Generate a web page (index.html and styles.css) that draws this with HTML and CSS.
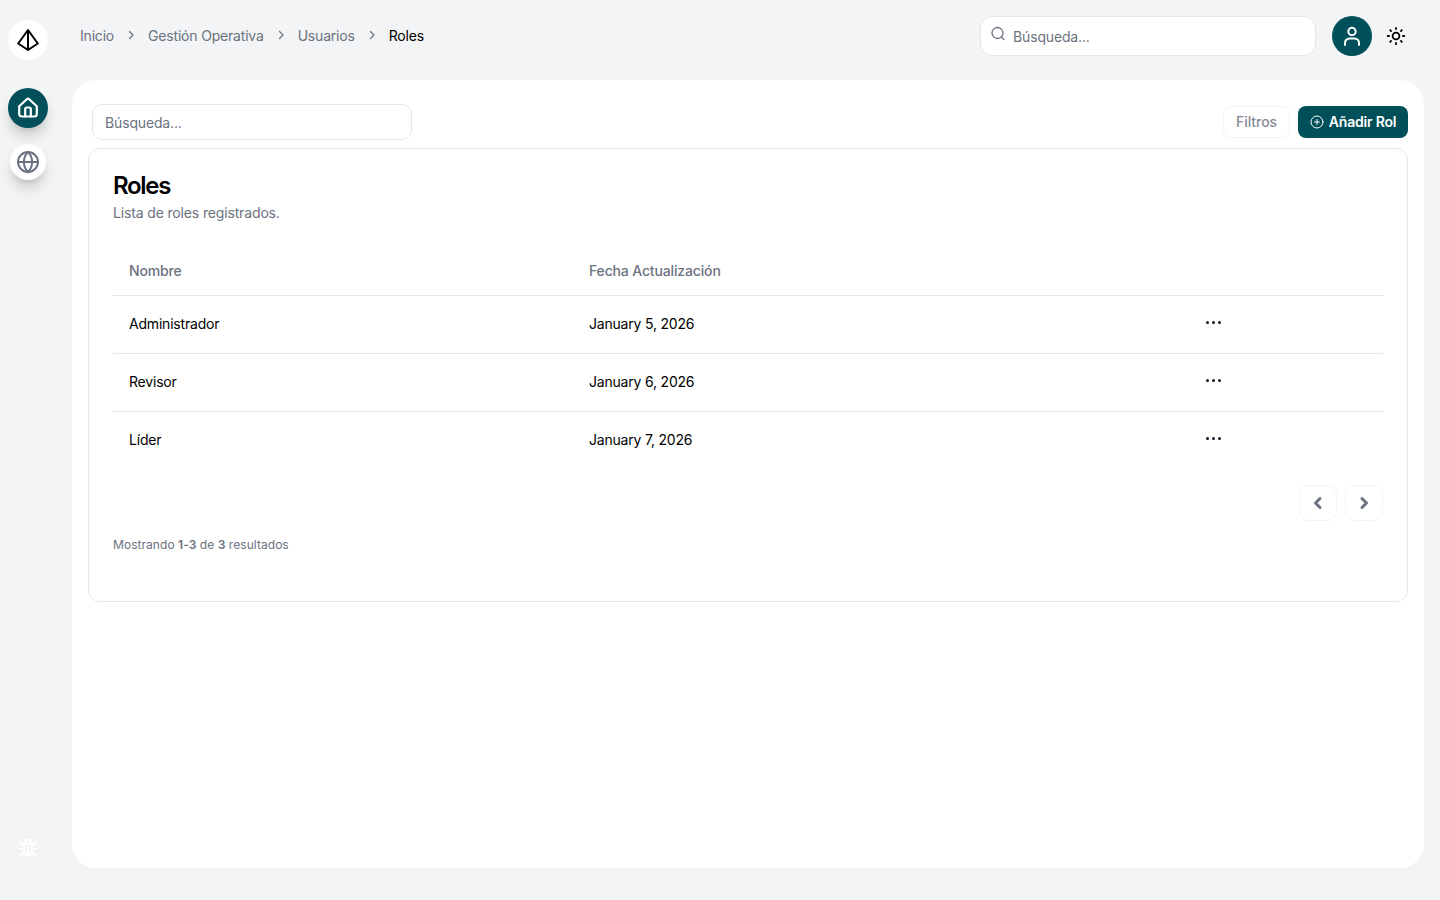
FILE: index.html
```html
<!DOCTYPE html>
<html lang="es">
<head>
    <meta charset="UTF-8">
    <meta name="viewport" content="width=device-width, initial-scale=1.0">
    <title>Roles</title>
    <link rel="stylesheet" href="styles.css">
</head>
<body>
    <aside class="sidebar">
        <div class="logo">
            <svg width="24" height="24" viewBox="0 0 24 24" fill="none" stroke="#000" stroke-width="2" stroke-linejoin="round"><path d="M12 2 L2.200 15.500 L12 22 L21.800 15.500 Z M12 2 V22"/></svg>
        </div>
        <nav class="side-nav">
            <a class="nav-btn active">
                <svg width="24" height="24" viewBox="0 0 24 24" fill="none" stroke="#fff" stroke-width="2.200" stroke-linecap="round" stroke-linejoin="round"><path d="M3.200 10.300 L10.800 3.200 A1.800 1.800 0 0 1 13.200 3.200 L20.800 10.300 V18 A2.500 2.500 0 0 1 18.300 20.500 H5.700 A2.500 2.500 0 0 1 3.200 18 Z"/><path d="M9.200 20.500 V13 A1.500 1.500 0 0 1 10.700 11.500 H13.300 A1.500 1.500 0 0 1 14.800 13 V20.500"/></svg>
            </a>
            <a class="nav-btn">
                <svg width="24" height="24" viewBox="0 0 24 24" fill="none" stroke="#6b7280" stroke-width="2"><circle cx="12" cy="12" r="10"/><path d="M2 12 H22 M12 2 C6.500 7.500 6.500 16.500 12 22 C17.500 16.500 17.500 7.500 12 2"/></svg>
            </a>
        </nav>
        <div class="bug">
            <svg width="20" height="20" viewBox="0 0 20 20" fill="none" stroke="#fff" stroke-width="2" stroke-linecap="round"><path d="M6 7 H14 V13 A4 5 0 0 1 6 13 Z M10 8 V17 M7 6 C7 4 8.500 3 10 3 C11.500 3 13 4 13 6 M7 3 L8 4 M13 3 L12 4 M6 8 L2.500 6 M14 8 L17.500 6 M6 12 H2 M14 12 H18 M6.500 15 L3 18 M13.500 15 L17 18"/></svg>
        </div>
    </aside>

    <div class="page">
        <header class="topbar">
            <ol class="breadcrumb">
                <li>Inicio</li>
                <li class="sep"><svg width="12" height="12" viewBox="0 0 12 12" fill="none" stroke="#6b7280" stroke-width="1.200" stroke-linecap="round" stroke-linejoin="round"><path d="M4.500 2.500 L8 6 L4.500 9.500"/></svg></li>
                <li>Gestión Operativa</li>
                <li class="sep"><svg width="12" height="12" viewBox="0 0 12 12" fill="none" stroke="#6b7280" stroke-width="1.200" stroke-linecap="round" stroke-linejoin="round"><path d="M4.500 2.500 L8 6 L4.500 9.500"/></svg></li>
                <li>Usuarios</li>
                <li class="sep"><svg width="12" height="12" viewBox="0 0 12 12" fill="none" stroke="#6b7280" stroke-width="1.200" stroke-linecap="round" stroke-linejoin="round"><path d="M4.500 2.500 L8 6 L4.500 9.500"/></svg></li>
                <li class="current">Roles</li>
            </ol>
            <div class="top-actions">
                <div class="top-search">
                    <svg width="16" height="16" viewBox="0 0 16 16" fill="none" stroke="#6b7280" stroke-width="1.300" stroke-linecap="round"><circle cx="7.500" cy="7" r="5.500"/><path d="M11.500 11 L14 13.500"/></svg>
                    <span>Búsqueda...</span>
                </div>
                <div class="avatar">
                    <svg width="24" height="24" viewBox="0 0 24 24" fill="none" stroke="#fff" stroke-width="2" stroke-linecap="round"><circle cx="12" cy="7.500" r="3.700"/><path d="M5 21 V19 A4.500 4.500 0 0 1 9.500 14.500 H14.500 A4.500 4.500 0 0 1 19 19 V21"/></svg>
                </div>
                <div class="theme">
                    <svg width="20" height="20" viewBox="0 0 20 20" fill="none" stroke="#000" stroke-width="1.800" stroke-linecap="round"><circle cx="10" cy="10" r="3.400"/><path d="M10 1.800 V3 M10 17 V18.200 M1.800 10 H3 M17 10 H18.200 M4.200 4.200 L5 5 M15 15 L15.800 15.800 M4.200 15.800 L5 15 M15 5 L15.800 4.200"/></svg>
                </div>
            </div>
        </header>

        <main class="panel">
            <div class="toolbar">
                <div class="panel-search">Búsqueda...</div>
                <div class="toolbar-btns">
                    <button class="btn-filter">Filtros</button>
                    <button class="btn-add">
                        <svg width="14" height="14" viewBox="0 0 14 14" fill="none" stroke="#fff" stroke-width="1" stroke-linecap="round"><circle cx="7" cy="7" r="6"/><path d="M7 4.500 V9.500 M4.500 7 H9.500"/></svg>
                        Añadir Rol
                    </button>
                </div>
            </div>

            <section class="card">
                <h1>Roles</h1>
                <p class="subtitle">Lista de roles registrados.</p>

                <table class="roles">
                    <thead>
                        <tr>
                            <th class="col-name">Nombre</th>
                            <th class="col-date">Fecha Actualización</th>
                            <th></th>
                        </tr>
                    </thead>
                    <tbody>
                        <tr>
                            <td>Administrador</td>
                            <td>January 5, 2026</td>
                            <td class="dots"><i></i><i></i><i></i></td>
                        </tr>
                        <tr>
                            <td>Revisor</td>
                            <td>January 6, 2026</td>
                            <td class="dots"><i></i><i></i><i></i></td>
                        </tr>
                        <tr>
                            <td>Líder</td>
                            <td>January 7, 2026</td>
                            <td class="dots"><i></i><i></i><i></i></td>
                        </tr>
                    </tbody>
                </table>

                <div class="pager">
                    <button><svg width="16" height="16" viewBox="0 0 16 16" fill="none" stroke="#6b7280" stroke-width="3" stroke-linecap="round" stroke-linejoin="round"><path d="M10 3.500 L5.500 8 L10 12.500"/></svg></button>
                    <button><svg width="16" height="16" viewBox="0 0 16 16" fill="none" stroke="#6b7280" stroke-width="3" stroke-linecap="round" stroke-linejoin="round"><path d="M6 3.500 L10.500 8 L6 12.500"/></svg></button>
                </div>

                <p class="results">Mostrando <b>1-3</b> de <b>3</b> resultados</p>
            </section>
        </main>
    </div>
</body>
</html>
```
FILE: styles.css
```css
* {
    box-sizing: border-box;
}
body {
    margin: 0;
    height: 900px;
    overflow: hidden;
    display: flex;
    background: #f3f4f6;
    color: #000;
    font-family: Inter, "Noto Sans", sans-serif;
    font-size: 14px;
    letter-spacing: -0.15px;
}

/* sidebar */
.sidebar {
    width: 72px;
    padding: 20px 24px 0 8px;
    height: 868px;
    display: flex;
    flex-direction: column;
    align-items: center;
}
.logo {
    width: 40px;
    height: 40px;
    border-radius: 50%;
    background: #fff;
    display: flex;
    align-items: center;
    justify-content: center;
}
.side-nav {
    margin-top: 28px;
    display: flex;
    flex-direction: column;
    align-items: center;
    gap: 16px;
}
.nav-btn {
    width: 36px;
    height: 36px;
    border-radius: 50%;
    background: #fff;
    display: flex;
    align-items: center;
    justify-content: center;
    box-shadow: 0 10px 15px -3px rgba(0, 0, 0, 0.2), 0 4px 6px -4px rgba(0, 0, 0, 0.15);
}
.nav-btn.active {
    width: 40px;
    height: 40px;
    background: #014f59;
}
.bug {
    margin-top: auto;
    height: 20px;
    margin-bottom: 11px;
}

/* top bar */
.page {
    flex: 1;
    padding-right: 16px;
}
.topbar {
    height: 80px;
    padding: 16px 0 24px 8px;
    display: flex;
    align-items: center;
    justify-content: space-between;
}
.breadcrumb {
    list-style: none;
    margin: 0;
    padding: 0 0 2px;
    display: flex;
    align-items: center;
    color: #6b7280;
    letter-spacing: -0.19px;
}
.breadcrumb .sep {
    width: 34px;
    display: flex;
    justify-content: center;
}
.breadcrumb .current {
    color: #000;
}
.top-actions {
    display: flex;
    align-items: center;
}
.top-search {
    width: 336px;
    height: 40px;
    padding: 0 12px 0 9px;
    background: #fff;
    border: 1px solid #e5e7eb;
    border-radius: 12px;
    display: flex;
    align-items: center;
    gap: 7px;
    color: #6b7280;
}
.top-search svg {
    margin-top: -4px;
}
.avatar {
    width: 40px;
    height: 40px;
    margin-left: 16px;
    border-radius: 50%;
    background: #014f59;
    display: flex;
    align-items: center;
    justify-content: center;
}
.theme {
    width: 20px;
    height: 20px;
    margin: 0 18px 0 14px;
}

/* panel */
.panel {
    height: 788px;
    padding: 24px 16px;
    background: #fff;
    border-radius: 24px;
}
.toolbar {
    height: 44px;
    display: flex;
    justify-content: space-between;
    align-items: flex-start;
}
.panel-search {
    width: 320px;
    height: 36px;
    margin-left: 4px;
    padding: 0 12px;
    border: 1px solid #e5e7eb;
    border-radius: 10px;
    display: flex;
    align-items: center;
    color: #6b7280;
}
.toolbar-btns {
    display: flex;
    gap: 8px;
    padding-top: 2px;
}
.toolbar-btns button {
    height: 32px;
    padding: 0 0 2px;
    font-family: inherit;
    font-size: 14px;
    font-weight: 500;
    letter-spacing: -0.05px;
    border-radius: 8px;
}
.btn-filter {
    width: 67px;
    background: #fff;
    border: 1px solid #f3f4f6;
    color: #858b96;
}
.toolbar-btns .btn-add {
    width: 110px;
    background: #014f59;
    border: none;
    color: #fff;
    font-weight: 600;
    letter-spacing: -0.2px;
    display: flex;
    align-items: center;
    justify-content: center;
    gap: 5px;
}
.btn-add svg {
    margin-top: 2px;
}

/* card */
.card {
    height: 454px;
    padding: 24px;
    border: 1px solid #e5e7eb;
    border-radius: 12px;
}
.card h1 {
    margin: 0;
    font-size: 24px;
    font-weight: 600;
    line-height: 26px;
    letter-spacing: -1.3px;
}
.subtitle {
    margin: 4px 0 0;
    line-height: 20px;
    color: #6b7280;
}
.roles {
    width: 100%;
    margin-top: 22px;
    border-collapse: collapse;
    table-layout: fixed;
}
.roles th {
    height: 50px;
    padding: 2px 16px 0;
    text-align: left;
    font-weight: 500;
    color: #6b7280;
    border-bottom: 1px solid #e5e7eb;
}
.col-name {
    width: 460px;
}
.col-date {
    width: 617px;
}
.roles td {
    height: 58px;
    padding: 0 16px 2px;
    letter-spacing: -0.2px;
    border-bottom: 1px solid #e5e7eb;
}
.roles tr:last-child td {
    border-bottom: none;
}
.roles .dots {
    padding: 0 0 7px 16px;
}
.dots i {
    display: inline-block;
    width: 3px;
    height: 3px;
    margin-right: 3px;
    border-radius: 50%;
    background: #111827;
    vertical-align: middle;
}
.pager {
    margin-top: 16px;
    display: flex;
    justify-content: flex-end;
    gap: 8px;
}
.pager button {
    width: 38px;
    height: 36px;
    padding: 0;
    background: #fff;
    border: 1px solid #f3f4f6;
    border-radius: 10px;
    display: flex;
    align-items: center;
    justify-content: center;
}
.results {
    margin: 16px 0 0;
    font-size: 12px;
    line-height: 16px;
    letter-spacing: 0.05px;
    color: #6b7280;
}
.results b {
    font-weight: 600;
}
```
